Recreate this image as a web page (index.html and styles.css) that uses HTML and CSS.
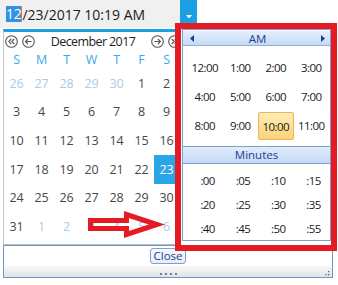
FILE: index.html
```html
<!DOCTYPE html>
<html lang="en">
<head>
    <meta charset="UTF-8">
    <meta name="viewport" content="width=device-width, initial-scale=1.0">
    <title>Date Time Picker</title>
    <link rel="stylesheet" href="styles.css">
</head>
<body>
<div class="screen">
    <!-- the edit box with its drop button -->
    <div class="input-row">
        <div class="field"><span class="sel">12</span><span class="caret"></span><span>/23/2017 10:19 AM</span></div>
        <div class="drop">
            <svg width="6" height="4" viewBox="0 0 6 4"><path d="M0 0H6L3 3.5Z" fill="#fff"/></svg>
        </div>
    </div>

    <!-- calendar drop down -->
    <div class="calendar">
        <div class="cal-nav">
            <div class="nav-group">
                <span class="nav-btn">
                    <svg width="13" height="13" viewBox="0 0 13 13"><circle cx="6.5" cy="6.5" r="5.8"/><path d="M6.3 4L3.8 6.5L6.3 9M9.3 4L6.8 6.5L9.3 9"/></svg>
                </span>
                <span class="nav-btn">
                    <svg width="13" height="13" viewBox="0 0 13 13"><circle cx="6.5" cy="6.5" r="5.8"/><path d="M9.5 6.5H3.6M6 4L3.6 6.5L6 9"/></svg>
                </span>
            </div>
            <div class="cal-title">December 2017</div>
            <div class="nav-group">
                <span class="nav-btn">
                    <svg width="13" height="13" viewBox="0 0 13 13"><circle cx="6.5" cy="6.5" r="5.8"/><path d="M3.5 6.5H9.4M7 4L9.4 6.5L7 9"/></svg>
                </span>
                <span class="nav-btn">
                    <svg width="13" height="13" viewBox="0 0 13 13"><circle cx="6.5" cy="6.5" r="5.8"/><path d="M3.7 4L6.2 6.5L3.7 9M6.7 4L9.2 6.5L6.7 9"/></svg>
                </span>
            </div>
        </div>
        <div class="cal-grid">
            <div class="dow">S</div><div class="dow">M</div><div class="dow">T</div><div class="dow">W</div><div class="dow">T</div><div class="dow">F</div><div class="dow">S</div>

            <div class="day other">26</div><div class="day other">27</div><div class="day other">28</div><div class="day other">29</div><div class="day other">30</div><div class="day">1</div><div class="day">2</div>
            <div class="day">3</div><div class="day">4</div><div class="day">5</div><div class="day">6</div><div class="day">7</div><div class="day">8</div><div class="day">9</div>
            <div class="day">10</div><div class="day">11</div><div class="day">12</div><div class="day">13</div><div class="day">14</div><div class="day">15</div><div class="day">16</div>
            <div class="day">17</div><div class="day">18</div><div class="day">19</div><div class="day">20</div><div class="day">21</div><div class="day">22</div><div class="day selected">23</div>
            <div class="day">24</div><div class="day">25</div><div class="day">26</div><div class="day">27</div><div class="day">28</div><div class="day">29</div><div class="day">30</div>
            <div class="day">31</div><div class="day other">1</div><div class="day other">2</div><div class="day other">3</div><div class="day other">4</div><div class="day other">5</div><div class="day other">6</div>
        </div>
    </div>

    <div class="footer">
        <div class="footer-body"><span class="close-btn">Close</span></div>
        <div class="grip">
            <span class="dots"><i></i><i></i><i></i><i></i></span>
            <svg class="resize" width="5" height="5" viewBox="0 0 5 5"><rect x="3" y="0" width="1.2" height="1.2"/><rect x="0.5" y="3" width="1.2" height="1.2"/><rect x="3" y="3" width="1.2" height="1.2"/></svg>
        </div>
    </div>

    <!-- time drop down, lies over the calendar footer -->
    <div class="time-popup">
        <div class="time-head">
            <svg width="4" height="7" viewBox="0 0 4 7"><path d="M4 0V7L0 3.5Z"/></svg>
            <span>AM</span>
            <svg width="4" height="7" viewBox="0 0 4 7"><path d="M0 0V7L4 3.5Z"/></svg>
        </div>
        <div class="hours">
            <div class="slot">12:00</div><div class="slot">1:00</div><div class="slot">2:00</div><div class="slot">3:00</div>
            <div class="slot">4:00</div><div class="slot">5:00</div><div class="slot">6:00</div><div class="slot">7:00</div>
            <div class="slot">8:00</div><div class="slot">9:00</div><div class="slot current">10:00</div><div class="slot">11:00</div>
        </div>
        <div class="min-head">Minutes</div>
        <div class="minutes">
            <div class="slot">:00</div><div class="slot">:05</div><div class="slot">:10</div><div class="slot">:15</div>
            <div class="slot">:20</div><div class="slot">:25</div><div class="slot">:30</div><div class="slot">:35</div>
            <div class="slot">:40</div><div class="slot">:45</div><div class="slot">:50</div><div class="slot">:55</div>
        </div>
    </div>

    <!-- red annotations drawn over the screenshot -->
    <div class="mark-box"></div>
    <svg class="mark-arrow" width="80" height="30" viewBox="0 0 80 30">
        <path d="M4.5 10.5H40.5V4.5L71 14.5L40.5 24.5V18.5H4.5Z"/>
    </svg>
</div>
</body>
</html>
```

FILE: styles.css
```css
body {
    margin: 0;
    font-family: 'Open Sans', 'Noto Sans', sans-serif;
    background-color: #fff;
}

.screen {
    position: relative;
    width: 338px;
    height: 285px;
    overflow: hidden;
    background-color: #fff;
}

/* edit box */
.input-row {
    display: flex;
    height: 29px;
}

.field {
    display: flex;
    align-items: center;
    width: 180px;
    height: 28px;
    box-sizing: border-box;
    padding-left: 6px;
    background-color: #f0f0f0;
    font-size: 14px;
    color: #1b1b1b;
}

.sel {
    background-color: #3191e3;
    color: #fff;
    line-height: 16px;
    letter-spacing: -0.3px;
}

.caret {
    width: 1px;
    height: 16px;
    background-color: #f07a1e;
}

.drop {
    display: flex;
    justify-content: center;
    padding-top: 15px;
    box-sizing: border-box;
    width: 17px;
    height: 28px;
    background-color: #1ba1e2;
}

/* calendar */
.calendar {
    width: 177px;
    margin-left: 3px;
    padding-bottom: 3px;
    border-left: 1px solid #c8c8c8;
    border-top: 3px solid #1ba1e2;
    border-bottom: 1px solid #bdbdb6;
}

.cal-nav {
    display: grid;
    grid-template-columns: auto 1fr auto;
    align-items: center;
    height: 18px;
    padding-left: 1px;
}

.nav-group {
    display: flex;
    gap: 4px;
}

.nav-btn {
    display: flex;
}

.nav-btn svg {
    fill: none;
    stroke: #555;
    stroke-width: 1.1;
}

.cal-title {
    text-align: center;
    font-size: 12.5px;
    letter-spacing: -0.6px;
    color: #1e1e1e;
}

.cal-grid {
    display: grid;
    grid-template-columns: repeat(7, 25px);
    grid-template-rows: 19px repeat(6, 28.67px);
    font-size: 12.5px;
    letter-spacing: -0.2px;
}

.dow,
.day {
    display: flex;
    align-items: center;
    justify-content: center;
}

.dow {
    color: #3aa8e6;
}

.day {
    color: #474747;
}

.day.other {
    color: #a8cbe9;
}

.day.selected {
    background-color: #29a6e8;
    color: #fff;
}

/* footer with close button */
.footer {
    width: 330px;
    margin-left: 3px;
    box-sizing: border-box;
    border: 1px solid #7096cc;
}

.footer-body {
    display: flex;
    justify-content: center;
    align-items: flex-start;
    height: 20px;
    padding-top: 2px;
    box-sizing: border-box;
}

.close-btn {
    height: 16px;
    padding: 0 2px;
    box-sizing: border-box;
    border: 1px solid #7c9fd6;
    border-radius: 3px;
    background: linear-gradient(#f7f9fd, #e5edf9);
    font-size: 11.5px;
    line-height: 14px;
    color: #1f3d7a;
}

.grip {
    position: relative;
    display: flex;
    justify-content: center;
    align-items: flex-end;
    height: 11px;
    padding-bottom: 2px;
    box-sizing: border-box;
    background: linear-gradient(#f8f8f8, #e2e2e2);
}

.dots {
    display: flex;
    gap: 3px;
}

.dots i {
    width: 2px;
    height: 2px;
    background-color: #6f7f9f;
}

.resize {
    position: absolute;
    right: 2px;
    bottom: 1px;
    fill: #555;
}

/* time drop down */
.time-popup {
    position: absolute;
    left: 182px;
    top: 29px;
    width: 149px;
    height: 212px;
    box-sizing: border-box;
    border: 1px solid #7da2ce;
    background-color: #fff;
}

.time-head {
    display: flex;
    justify-content: space-between;
    align-items: center;
    height: 14px;
    margin-top: 1px;
    padding: 0 5px 0 7px;
    border-bottom: 1px solid #8fb0dc;
    background: linear-gradient(#e4eefc, #c6dbf7);
    font-size: 11.5px;
    color: #1d3f8e;
}

.time-head svg {
    fill: #15428b;
}

.slot {
    display: flex;
    align-items: center;
    justify-content: center;
    font-size: 11.5px;
    letter-spacing: -0.6px;
    color: #1a1a1a;
}

.hours {
    display: grid;
    grid-template-columns: repeat(4, 1fr);
    grid-template-rows: repeat(3, 29px);
    padding: 7px 1px 6px 4px;
}

.slot.current {
    margin-top: 1px;
    border: 1px solid #f0b650;
    border-radius: 2px;
    background: linear-gradient(#feecb7, #fbd27a);
}

.min-head {
    height: 18px;
    box-sizing: border-box;
    border-top: 1px solid #7da2ce;
    border-bottom: 1px solid #7da2ce;
    background: linear-gradient(#e1ecfb, #c5daf6);
    text-align: center;
    font-size: 11.5px;
    line-height: 16px;
    color: #1d3f8e;
}

.minutes {
    display: grid;
    grid-template-columns: repeat(4, 35.3px);
    grid-template-rows: repeat(3, 24px);
    padding: 4px 0 1px 7px;
}

/* annotations */
.mark-box {
    position: absolute;
    left: 175px;
    top: 23px;
    width: 162px;
    height: 228px;
    box-sizing: border-box;
    border: 6px solid #e51b23;
}

.mark-arrow {
    position: absolute;
    left: 86px;
    top: 210px;
    fill: none;
    stroke: #e51b23;
    stroke-width: 5;
}
```
